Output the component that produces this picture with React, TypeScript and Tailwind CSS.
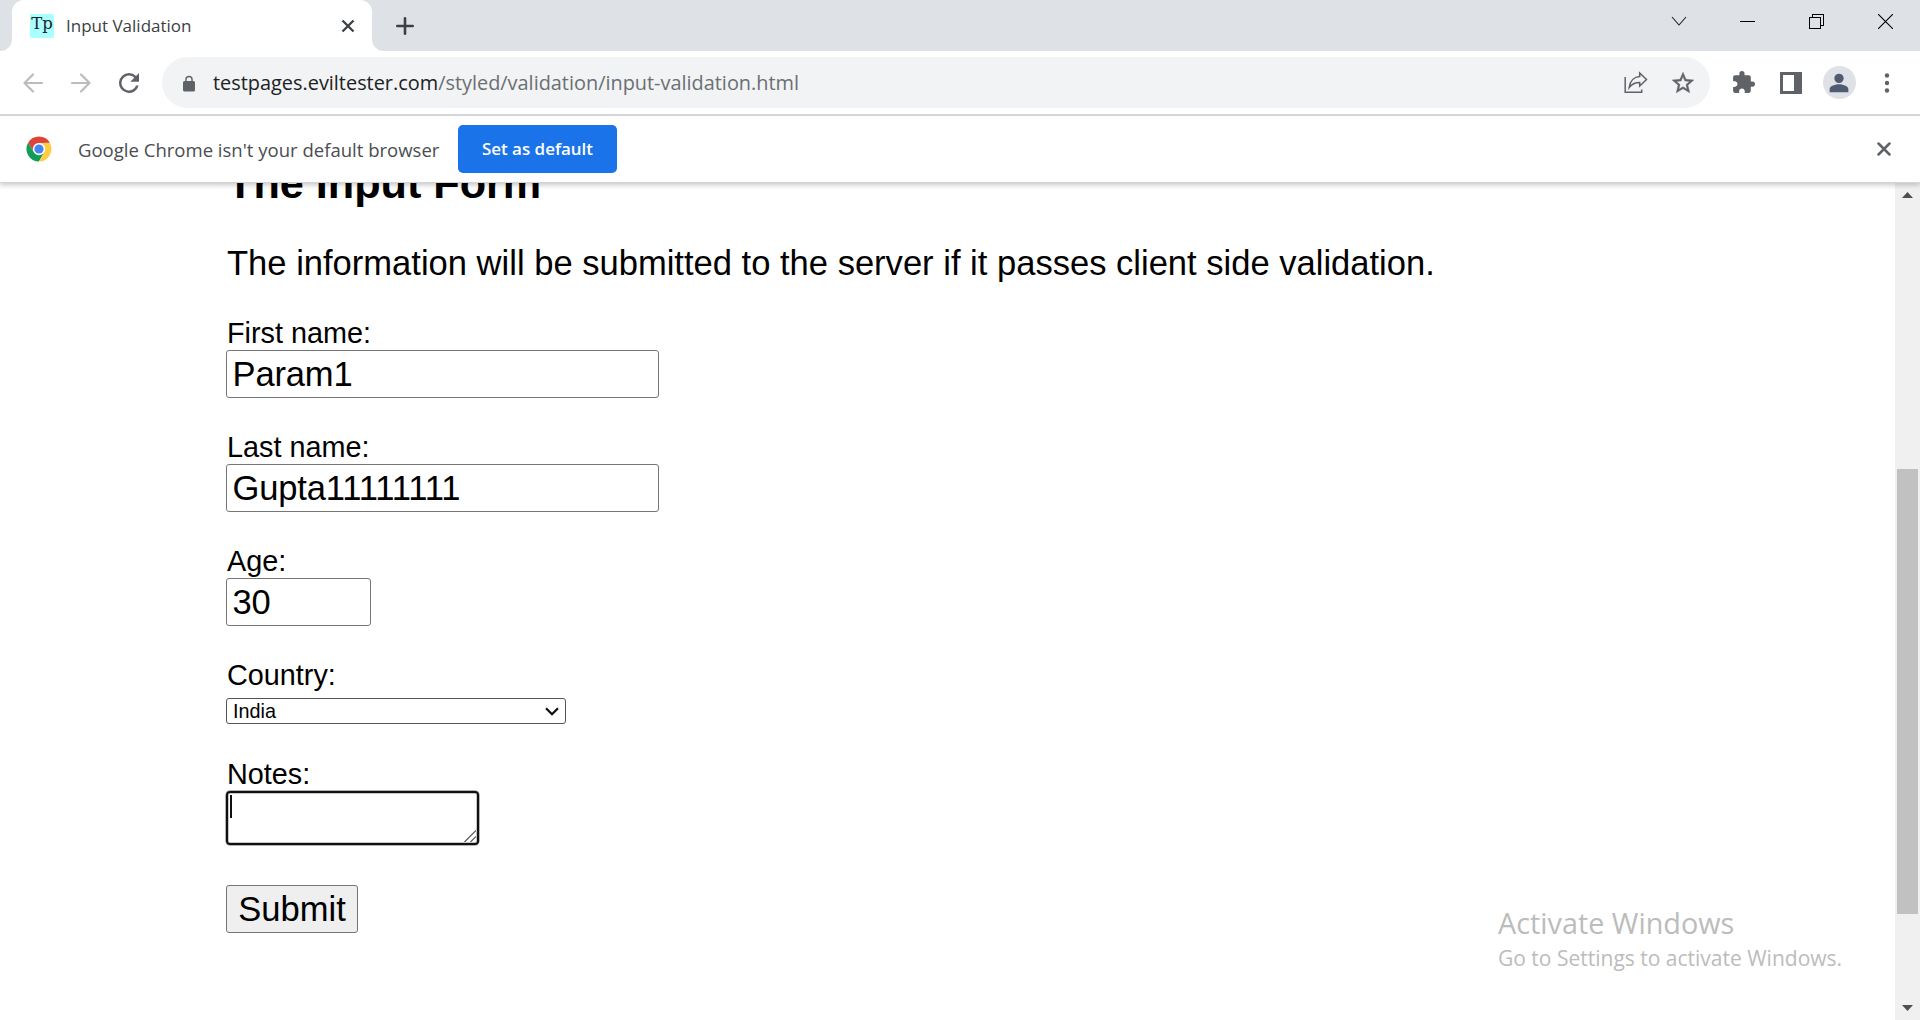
import React from "react";

const ui = "font-['Open_Sans',sans-serif]";

function Slot({ children, className = "w-12" }: { children: React.ReactNode; className?: string }) {
  return <div className={`flex h-full shrink-0 items-center justify-center ${className}`}>{children}</div>;
}

function MaterialIcon({ d, size, color }: { d: string; size: number; color: string }) {
  return (
    <svg width={size} height={size} viewBox="0 0 24 24" fill={color}>
      <path d={d} />
    </svg>
  );
}

function ChromeLogo() {
  return (
    <svg width="26" height="26" viewBox="-13 -13 26 26">
      <circle r="12.6" fill="#fff" />
      <path d="M-10.9 -6.3A12.6 12.6 0 0 1 10.9 -6.3L0 -6.1A6.1 6.1 0 0 0 -5.3 3.05Z" fill="#db4437" />
      <path d="M-10.9 -6.3A12.6 12.6 0 0 0 0 12.6L5.3 3.05A6.1 6.1 0 0 1 -5.3 3.05Z" fill="#0f9d58" />
      <path d="M10.9 -6.1H0A6.1 6.1 0 0 1 5.3 3.05L0 12.6A12.6 12.6 0 0 0 10.9 -6.1Z" fill="#ffcd40" />
      <circle r="5.6" fill="#fff" />
      <circle r="4.6" fill="#4285f4" />
    </svg>
  );
}

function TabStrip() {
  return (
    <div className="flex h-[51px] shrink-0 bg-white">
      <div className="w-3 rounded-br-xl bg-[#dee1e6]" />
      <div className="w-[360px] bg-[linear-gradient(#dee1e6_50%,#fff_50%)]">
        <div className="flex h-full items-center rounded-t-xl bg-white pl-[18px] pr-[17px]">
          <div className="flex size-6 items-center justify-center rounded-[2px] bg-[#aaffff] pb-0.5 font-['DejaVu_Serif',serif] text-[16.5px] leading-none text-[#222]">
            Tp
          </div>
          <span className={`ml-3 text-[17px] leading-6 text-[#3c4043] ${ui}`}>Input Validation</span>
          <svg className="ml-auto" width="14" height="14" viewBox="0 0 14 14" stroke="#3c4043" strokeWidth="2.3">
            <path d="M1.5 1.5L12.5 12.5M12.5 1.5L1.5 12.5" />
          </svg>
        </div>
      </div>
      <div className="flex grow items-center rounded-bl-xl bg-[#dee1e6] pl-6">
        <svg width="18" height="18" viewBox="0 0 18 18" stroke="#3c4043" strokeWidth="2.6" strokeLinecap="round">
          <path d="M9 1.3V16.7M1.3 9H16.7" />
        </svg>
        <div className="mb-2 ml-auto flex h-[43px] items-center">
          <Slot className="w-[69px]">
            <svg width="17" height="11" viewBox="0 0 17 11" fill="none" stroke="#222" strokeWidth="1.1">
              <path d="M2 1L9 9L16 1" />
            </svg>
          </Slot>
          <Slot className="w-[69px]">
            <div className="h-px w-[15px] bg-black" />
          </Slot>
          <Slot className="w-[69px]">
            <svg width="15" height="15" viewBox="0 0 15 15" fill="none" stroke="#000" shapeRendering="crispEdges">
              <path d="M0.5 3.5H11.5V14.5H0.5ZM3.5 3.5V0.5H14.5V11.5H11.5" />
            </svg>
          </Slot>
          <Slot className="w-[69px]">
            <svg width="15" height="15" viewBox="0 0 15 15" stroke="#000" strokeWidth="1.1">
              <path d="M0 0L15 15M15 0L0 15" />
            </svg>
          </Slot>
        </div>
      </div>
    </div>
  );
}

function Toolbar() {
  return (
    <div className="flex h-[65px] shrink-0 items-center border-b-2 border-[#dadce0] bg-white px-[9px]">
      <Slot>
        <svg width="20" height="20" viewBox="0 0 20 20" fill="none" stroke="#babcbe" strokeWidth="2.2" strokeLinecap="round" strokeLinejoin="round">
          <path d="M10 1.5L1.5 10L10 18.5M1.5 10H19" />
        </svg>
      </Slot>
      <Slot>
        <svg width="20" height="20" viewBox="0 0 20 20" fill="none" stroke="#babcbe" strokeWidth="2.2" strokeLinecap="round" strokeLinejoin="round">
          <path d="M10 1.5L18.5 10L10 18.5M18.5 10H1" />
        </svg>
      </Slot>
      <Slot>
        <MaterialIcon
          size={30}
          color="#5f6368"
          d="M17.65 6.35A7.95 7.95 0 0 0 12 4a8 8 0 1 0 7.73 10h-2.08A6 6 0 1 1 12 6c1.66 0 3.14.69 4.22 1.78L13 11h7V4z"
        />
      </Slot>
      <div className="ml-[9px] flex h-[51px] w-[1548px] items-center rounded-full bg-[#f1f3f4] pl-[18px] pr-[3px]">
        <svg className="mt-0.5" width="18" height="18" viewBox="0 0 24 24" fill="#5f6368">
          <path d="M18 8h-1V6A5 5 0 0 0 7 6v2H6a2 2 0 0 0-2 2v10c0 1.1.9 2 2 2h12a2 2 0 0 0 2-2V10a2 2 0 0 0-2-2zM8.9 8V6a3.1 3.1 0 0 1 6.2 0v2z" />
        </svg>
        <div className={`ml-[15px] text-[19.9px] leading-7 text-[#6b6f73] ${ui}`}>
          <span className="text-[#202124]">testpages.eviltester.com</span>/styled/validation/input-validation.html
        </div>
        <div className="ml-auto flex h-full">
          <Slot className="w-12 pl-0.5">
            <svg width="24" height="24" viewBox="0 0 24 24" fill="none" stroke="#5f6368" strokeWidth="1.5">
              <path d="M1.2 6V21.2H17.7V18.5" />
              <path d="M5.2 16.5C6 9.5 10.5 5.7 15.7 5.4V2L22.5 8.5L15.7 15V11.5C11.5 11.5 8 12.7 5.2 16.5Z" />
            </svg>
          </Slot>
          <Slot>
            <svg width="26" height="26" viewBox="0 0 24 24" fill="#5f6368" stroke="#5f6368" strokeWidth="0.4">
              <path d="M22 9.24l-7.19-.62L12 2 9.19 8.63 2 9.24l5.46 4.73L5.82 21 12 17.27 18.18 21l-1.63-7.03L22 9.24zM12 15.4l-3.76 2.27 1-4.28-3.32-2.88 4.38-.38L12 6.1l1.71 4.04 4.38.38-3.32 2.88 1 4.28L12 15.4z" />
            </svg>
          </Slot>
        </div>
      </div>
      <div className="ml-auto flex h-full">
        <Slot>
          <MaterialIcon
            size={25}
            color="#5f6368"
            d="M20.5 11H19V7c0-1.1-.9-2-2-2h-4V3.5a2.5 2.5 0 0 0-5 0V5H4c-1.1 0-1.99.9-1.99 2v3.8H3.5c1.49 0 2.7 1.21 2.7 2.7s-1.21 2.7-2.7 2.7H2V20c0 1.1.9 2 2 2h3.8v-1.5c0-1.49 1.21-2.7 2.7-2.7s2.7 1.21 2.7 2.7V22H17c1.1 0 2-.9 2-2v-4h1.5a2.5 2.5 0 0 0 0-5z"
          />
        </Slot>
        <Slot>
          <div className="h-[22px] w-[22px] border-[3px] border-r-[8px] border-[#5f6368]" />
        </Slot>
        <Slot>
          <div className="flex size-[33px] items-center justify-center rounded-full bg-[#dee1e6]">
            <MaterialIcon
              size={28}
              color="#4f5b70"
              d="M12 12a4 4 0 1 0 0-8 4 4 0 0 0 0 8zm0 1c-2.67 0-8 1.34-8 4v3h16v-3c0-2.66-5.33-4-8-4z"
            />
          </div>
        </Slot>
        <Slot>
          <svg width="6" height="20" viewBox="0 0 6 20" fill="#5f6368">
            <circle cx="3" cy="2.5" r="2.2" />
            <circle cx="3" cy="10" r="2.2" />
            <circle cx="3" cy="17.5" r="2.2" />
          </svg>
        </Slot>
      </div>
    </div>
  );
}

function InfoBar() {
  return (
    <div className="relative z-10 flex h-[67px] shrink-0 items-center border-b border-[#d3d6d8] bg-white pl-[26px] pr-[29px] shadow-[0_2px_5px_rgba(0,0,0,0.22)]">
      <ChromeLogo />
      <span className={`ml-[26px] w-[380px] pt-0.5 text-[18.55px] leading-7 text-[#4a4d51] ${ui}`}>
        Google Chrome isn't your default browser
      </span>
      <button className={`h-12 w-[159px] rounded-[5px] bg-[#1a73e8] text-[16.95px] font-semibold leading-6 text-white ${ui}`}>
        Set as default
      </button>
      <svg className="ml-auto" width="14" height="14" viewBox="0 0 14 14" stroke="#5f6368" strokeWidth="2.5" strokeLinecap="round">
        <path d="M1.5 1.5L12.5 12.5M12.5 1.5L1.5 12.5" />
      </svg>
    </div>
  );
}

function TextField({ label, value, width }: { label: string; value: string; width: string }) {
  return (
    <div className="mb-[33px]">
      <label className="block h-[33px] pl-px text-[28.8px] leading-8">{label}</label>
      <div
        className={`flex h-12 items-center rounded-[3px] border border-[#767676] bg-white pl-[5.5px] text-[34.56px] leading-10 tracking-[-0.15px] ${width}`}
      >
        {value}
      </div>
    </div>
  );
}

function FormPage() {
  return (
    <main className="grow overflow-hidden bg-white pl-[226px] font-['Liberation_Sans',Arial,sans-serif] text-black">
      <h2 className="-mt-6 mb-9 pl-px text-[43.2px] font-bold leading-[48px]">The Input Form</h2>
      <p className="mb-[34px] pl-px text-[34.56px] leading-10">
        The information will be submitted to the server if it passes client side validation.
      </p>
      <TextField label="First name:" value="Param1" width="w-[433px]" />
      <TextField label="Last name:" value="Gupta11111111" width="w-[433px]" />
      <TextField label="Age:" value="30" width="w-[145px]" />
      <label className="block h-[39px] pl-px text-[28.8px] leading-8">Country:</label>
      <div className="flex h-[26px] w-[340px] items-center justify-between rounded-[3px] border border-[#555] px-1.5 text-[19.8px] leading-6">
        <span>India</span>
        <svg width="14" height="9" viewBox="0 0 14 9" fill="none" stroke="#111" strokeWidth="2.3">
          <path d="M1 1.2L7 7.2L13 1.2" />
        </svg>
      </div>
      <label className="mt-[34px] block h-[33px] pl-px text-[28.8px] leading-8">Notes:</label>
      <div className="flex h-[54px] w-[253px] justify-between rounded-[4px] border-2 border-[#101010] pl-0.5 shadow-[inset_0_0_0_1px_#c8c8c8,0_0_0_0.5px_#666]">
        <div className="mt-0.5 h-[23px] w-0.5 bg-[#111]" />
        <svg className="mb-px mr-px self-end" width="12" height="12" viewBox="0 0 12 12" stroke="#555" strokeWidth="1.2">
          <path d="M0.5 12L12 0.5M6.5 12L12 6.5" />
        </svg>
      </div>
      <button className="mt-10 block h-12 w-[132px] rounded-[3px] border border-[#767676] bg-[#efefef] text-center text-[34.56px] leading-[46px]">
        Submit
      </button>
    </main>
  );
}

function Scrollbar() {
  return (
    <div className="flex w-[25px] shrink-0 flex-col items-center bg-[#f0f0f0] py-[9px]">
      <svg width="11" height="6" viewBox="0 0 11 6" fill="#505050">
        <path d="M0 6L5.5 0L11 6Z" />
      </svg>
      <div className="mt-[271px] h-[445px] w-[21px] bg-[#c1c1c1]" />
      <svg className="mt-auto" width="11" height="6" viewBox="0 0 11 6" fill="#505050">
        <path d="M0 0L5.5 6L11 0Z" />
      </svg>
    </div>
  );
}

export default function App() {
  return (
    <div className="relative flex h-[1020px] w-[1920px] flex-col overflow-hidden bg-white">
      <TabStrip />
      <Toolbar />
      <InfoBar />
      <div className="flex min-h-0 grow">
        <FormPage />
        <Scrollbar />
      </div>
      <div className={`pointer-events-none absolute left-[1498px] top-[902px] whitespace-nowrap text-[#bcbcbc] ${ui}`}>
        <div className="text-[28.8px] leading-[42px]">Activate Windows</div>
        <div className="text-[21px] leading-7">Go to Settings to activate Windows.</div>
      </div>
    </div>
  );
}
